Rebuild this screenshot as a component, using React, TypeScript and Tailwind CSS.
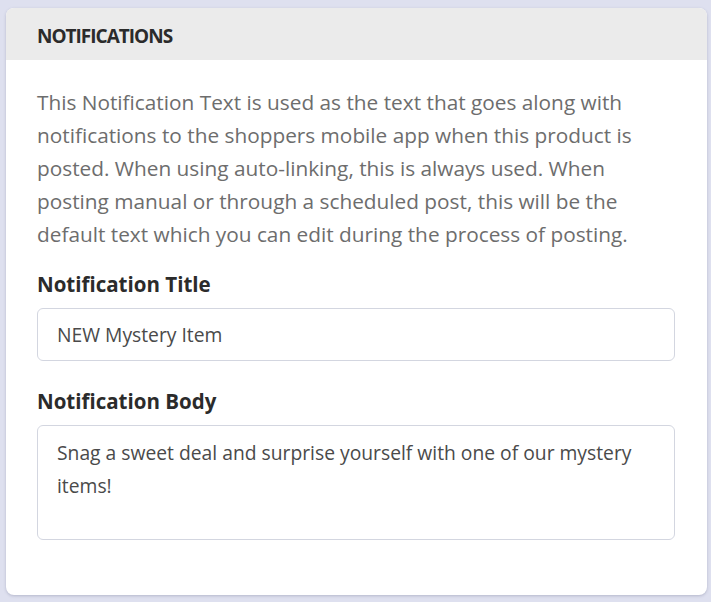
import React from 'react';

const App: React.FC = () => {
    return (
        <div className="min-h-screen w-full bg-[#dee0ef] pt-2 pl-[6px] pr-1 pb-2 font-['Open_Sans',sans-serif]">
            <div className="w-full rounded-lg bg-white shadow-[0_1px_3px_rgba(60,64,100,0.25)] overflow-hidden">
                <div className="h-[52px] bg-[#ebebeb] flex items-center pl-[31px] pr-8">
                    <h2 className="text-[19px] font-bold text-[#2b2b2b] tracking-[-1px] pt-[4px]">NOTIFICATIONS</h2>
                </div>
                <div className="pl-[31px] pr-8 pt-[26px] pb-[55px]">
                    <p className="text-[20.8px] leading-[33px] text-[#6d6d6d]">
                        This Notification Text is used as the text that goes along with notifications to the shoppers mobile app when this product is posted. When using auto-linking, this is always used. When posting manual or through a scheduled post, this will be the default text which you can edit during the process of posting.
                    </p>
                    <label className="block mt-[18px]">
                        <span className="block text-[20.5px] leading-[30px] font-bold text-[#2b2b2b]">Notification Title</span>
                        <input
                            className="mt-[9px] block w-full h-[53px] rounded-md border border-[#d3d6e0] bg-white px-[19px] text-[19.3px] text-[#4a4a4a] outline-none"
                            defaultValue="NEW Mystery Item"
                        />
                    </label>
                    <label className="block mt-[25px]">
                        <span className="block text-[20.5px] leading-[30px] font-bold text-[#2b2b2b]">Notification Body</span>
                        <textarea
                            className="mt-[9px] block w-full h-[115px] resize-none rounded-md border border-[#d3d6e0] bg-white px-[19px] pt-[10px] text-[19.3px] leading-[33px] text-[#4a4a4a] outline-none"
                            defaultValue="Snag a sweet deal and surprise yourself with one of our mystery items!"
                        />
                    </label>
                </div>
            </div>
        </div>
    );
};

export default App;
